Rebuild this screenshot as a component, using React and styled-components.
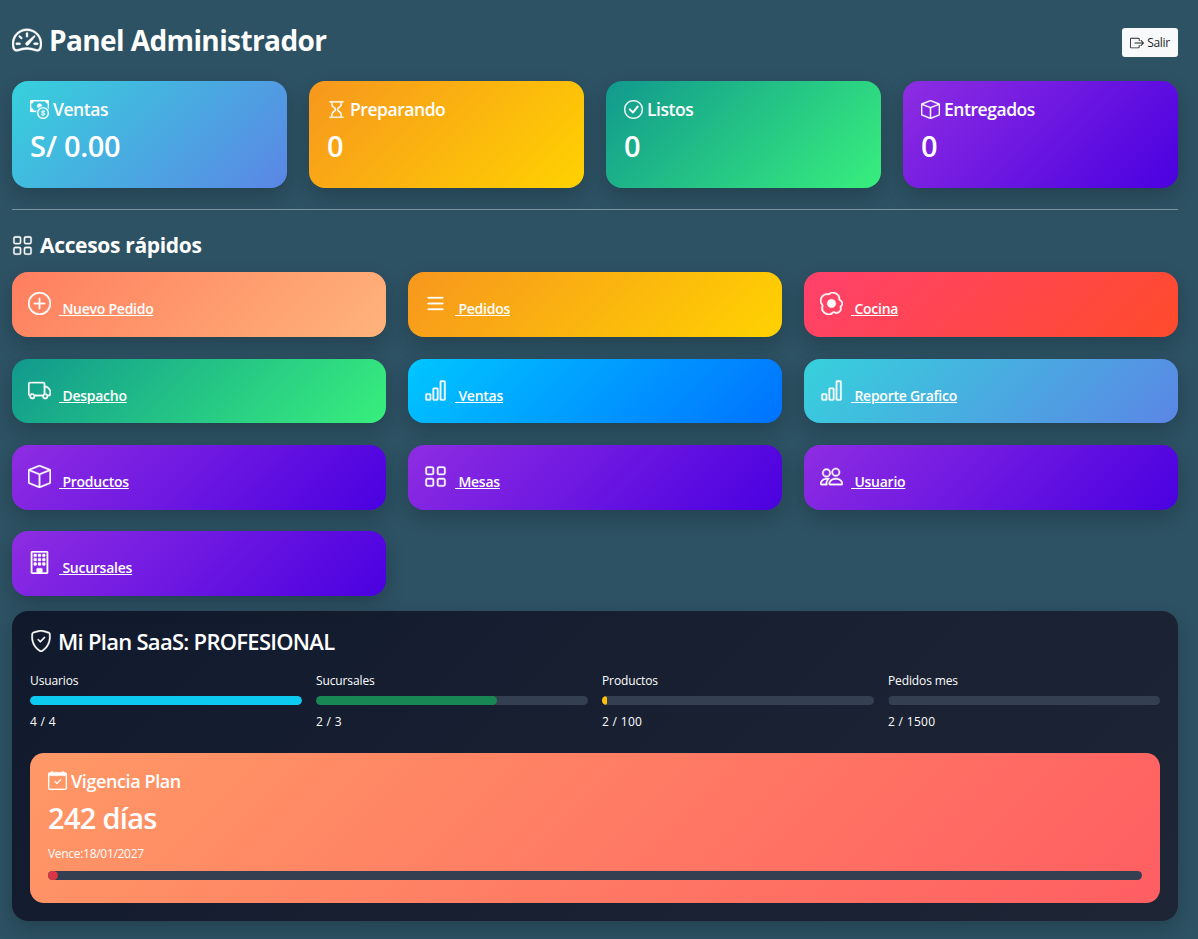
import React from "react";
import styled, { createGlobalStyle } from "styled-components";
import {
  BsSpeedometer2, BsBoxArrowRight, BsCashCoin, BsHourglass, BsCheckCircle, BsBox,
  BsGrid, BsPlusCircle, BsList, BsEggFried, BsTruck, BsBarChart, BsPeople,
  BsBuilding, BsShieldCheck, BsCalendarCheck,
} from "react-icons/bs";

const gradients = {
  aqua: "#36d1dc, #5b86e5",
  amber: "#f7971e, #ffd200",
  green: "#11998e, #38ef7d",
  violet: "#8e2de2, #4a00e0",
  peach: "#ff7e5f, #feb47b",
  red: "#ff416c, #ff4b2b",
  blue: "#00c6ff, #0072ff",
};

const GlobalStyle = createGlobalStyle`
  html, body {
    margin: 0;
    background: #2d5264;
    font-family: "Open Sans", "Noto Sans", sans-serif;
    color: #fff;
  }
  svg {
    stroke: currentColor;
    stroke-width: 0.25;
  }
`;

const Page = styled.div`
  box-sizing: border-box;
  width: 1198px;
  height: 939px;
  padding: 24px 20px 18px 12px;
  background: #2d5264;
  overflow: hidden;
`;

const Header = styled.header`
  display: flex;
  justify-content: space-between;
  align-items: center;
  height: 33px;
  margin-bottom: 24px;
`;

const Title = styled.h1`
  display: flex;
  align-items: center;
  gap: 7px;
  margin: 0;
  padding-bottom: 2px;
  font-size: 28px;
  font-weight: 700;
  letter-spacing: -0.6px;
  svg { font-size: 30px; }
`;

const ExitButton = styled.button`
  display: flex;
  align-items: center;
  justify-content: center;
  gap: 3px;
  align-self: flex-end;
  width: 56px;
  height: 29px;
  padding: 0;
  border: 0;
  border-radius: 3px;
  background: #f8f9fa;
  color: #212529;
  font: 500 12px "Open Sans", sans-serif;
  letter-spacing: -0.3px;
  svg { font-size: 14px; stroke-width: 0; }
`;

const StatRow = styled.section`
  display: grid;
  grid-template-columns: repeat(4, 275px);
  column-gap: 22px;
`;

const StatCard = styled.div`
  box-sizing: border-box;
  height: 107px;
  padding: 16px 18px;
  border-radius: 16px;
  background: linear-gradient(135deg, ${(p) => gradients[p.$tone]});
  box-shadow: 0 8px 20px rgba(0, 0, 0, 0.2);
`;

const StatLabel = styled.div`
  display: flex;
  align-items: center;
  gap: 4px;
  height: 24px;
  font-size: 17.5px;
  font-weight: 600;
  letter-spacing: -0.45px;
  svg { font-size: 19px; flex: none; }
`;

const StatValue = styled.div`
  margin-top: 7px;
  font-size: 29px;
  line-height: 36px;
  font-weight: 600;
  letter-spacing: -0.3px;
`;

const Divider = styled.hr`
  height: 1px;
  margin: 21px 0 0;
  border: 0;
  background: #7b95a1;
`;

const SectionTitle = styled.h2`
  display: flex;
  align-items: center;
  gap: 7px;
  height: 28px;
  margin: 21px 0 13.2px;
  font-size: 21px;
  font-weight: 700;
  letter-spacing: -0.33px;
  svg { font-size: 21px; }
`;

const TileGrid = styled.nav`
  display: grid;
  grid-template-columns: repeat(3, 374px);
  column-gap: 22px;
  row-gap: 21.8px;
`;

const Tile = styled.div`
  box-sizing: border-box;
  height: 64.6px;
  padding: 20px 16px 0;
  border-radius: 16px;
  background: linear-gradient(135deg, ${(p) => gradients[p.$tone]});
  box-shadow: 0 8px 20px rgba(0, 0, 0, 0.2);
  line-height: 24px;
  svg {
    font-size: 23px;
    vertical-align: -1px;
  }
`;

const TileLink = styled.a`
  margin-left: 8px;
  font-size: 14px;
  font-weight: 600;
  letter-spacing: -0.25px;
  color: #fff;
  text-decoration: underline;
  white-space: pre;
`;

const PlanPanel = styled.section`
  box-sizing: border-box;
  height: 310px;
  margin-top: 14.8px;
  padding: 18px;
  border-radius: 16px;
  background: linear-gradient(135deg, #111a2d, #1e2535);
  box-shadow: 0 8px 20px rgba(0, 0, 0, 0.2);
`;

const PlanTitle = styled.h3`
  display: flex;
  align-items: center;
  gap: 6px;
  height: 24px;
  margin: 0 0 20px;
  font-size: 22px;
  font-weight: 600;
  letter-spacing: -0.72px;
  svg { font-size: 22px; }
`;

const UsageRow = styled.div`
  display: grid;
  grid-template-columns: repeat(4, 272px);
  column-gap: 14px;
`;

const UsageLabel = styled.div`
  font-size: 12px;
  line-height: 16px;
  letter-spacing: -0.12px;
`;

const Track = styled.div`
  height: 9px;
  border-radius: 5px;
  background: #343f52;
  overflow: hidden;
`;

const UsageTrack = styled(Track)`
  margin: 7px 0 9px;
`;

const Fill = styled.div`
  height: 100%;
  border-radius: 5px;
  background: ${(p) => p.$color};
`;

const UsageCount = styled.div`
  font-size: 12px;
  line-height: 16px;
  letter-spacing: 0.3px;
`;

const ValidityCard = styled.div`
  box-sizing: border-box;
  height: 150px;
  margin-top: 23px;
  padding: 16px 18px;
  border-radius: 14px;
  background: linear-gradient(135deg, #ff9966, #ff5e62);
`;

const ValidityLabel = styled(StatLabel)`
  font-size: 18px;
  letter-spacing: -0.4px;
`;

const ValidityValue = styled(StatValue)`
  margin-top: 7px;
  letter-spacing: -0.7px;
`;

const ValidityNote = styled.div`
  margin: 10px 0 9px;
  font-size: 12px;
  line-height: 16px;
  letter-spacing: -0.3px;
`;

const stats = [
  { tone: "aqua", icon: <BsCashCoin />, label: "Ventas", value: "S/ 0.00" },
  { tone: "amber", icon: <BsHourglass />, label: "Preparando", value: "0" },
  { tone: "green", icon: <BsCheckCircle />, label: "Listos", value: "0" },
  { tone: "violet", icon: <BsBox />, label: "Entregados", value: "0" },
];

const tiles = [
  { tone: "peach", icon: <BsPlusCircle />, label: "Nuevo Pedido" },
  { tone: "amber", icon: <BsList />, label: "Pedidos" },
  { tone: "red", icon: <BsEggFried />, label: "Cocina" },
  { tone: "green", icon: <BsTruck />, label: "Despacho" },
  { tone: "blue", icon: <BsBarChart />, label: "Ventas" },
  { tone: "aqua", icon: <BsBarChart />, label: "Reporte Grafico" },
  { tone: "violet", icon: <BsBox />, label: "Productos" },
  { tone: "violet", icon: <BsGrid />, label: "Mesas" },
  { tone: "violet", icon: <BsPeople />, label: "Usuario" },
  { tone: "violet", icon: <BsBuilding />, label: "Sucursales" },
];

const usage = [
  { label: "Usuarios", used: 4, total: 4, color: "#0dcaf0" },
  { label: "Sucursales", used: 2, total: 3, color: "#198754" },
  { label: "Productos", used: 2, total: 100, color: "#ffc107" },
  { label: "Pedidos mes", used: 2, total: 1500, color: "#212529" },
];

export default function App() {
  return (
    <Page>
      <GlobalStyle />
      <Header>
        <Title><BsSpeedometer2 /> Panel Administrador</Title>
        <ExitButton><BsBoxArrowRight /> Salir</ExitButton>
      </Header>

      <StatRow>
        {stats.map((s) => (
          <StatCard key={s.label} $tone={s.tone}>
            <StatLabel>{s.icon} {s.label}</StatLabel>
            <StatValue>{s.value}</StatValue>
          </StatCard>
        ))}
      </StatRow>

      <Divider />

      <SectionTitle><BsGrid /> Accesos rápidos</SectionTitle>
      <TileGrid>
        {tiles.map((t) => (
          <Tile key={t.label} $tone={t.tone}>
            {t.icon}
            <TileLink href="#">{" " + t.label}</TileLink>
          </Tile>
        ))}
      </TileGrid>

      <PlanPanel>
        <PlanTitle><BsShieldCheck /> Mi Plan SaaS: PROFESIONAL</PlanTitle>
        <UsageRow>
          {usage.map((u) => (
            <div key={u.label}>
              <UsageLabel>{u.label}</UsageLabel>
              <UsageTrack>
                <Fill $color={u.color} style={{ width: `${(u.used / u.total) * 100}%` }} />
              </UsageTrack>
              <UsageCount>{u.used} / {u.total}</UsageCount>
            </div>
          ))}
        </UsageRow>
        <ValidityCard>
          <ValidityLabel><BsCalendarCheck /> Vigencia Plan</ValidityLabel>
          <ValidityValue>242 días</ValidityValue>
          <ValidityNote>Vence:18/01/2027</ValidityNote>
          <Track>
            <Fill $color="#dc3545" style={{ width: "0.9%" }} />
          </Track>
        </ValidityCard>
      </PlanPanel>
    </Page>
  );
}
